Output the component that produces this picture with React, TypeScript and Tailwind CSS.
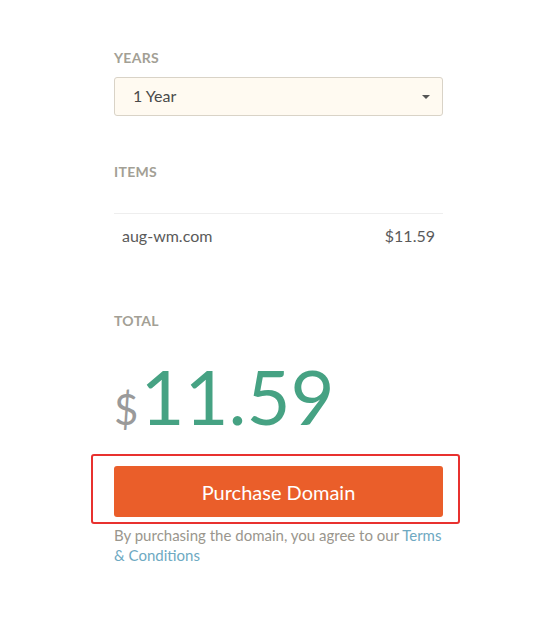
import React from "react";

export default function App() {
  return (
    <div className="min-h-[636px] w-full bg-white" style={{ fontFamily: 'Lato, "Open Sans", sans-serif' }}>
      <div className="ml-[114px] w-[329px] pt-[49px]">
        <div className="text-[14px] font-bold leading-[18px] text-[#a39f95] tracking-[0.3px]">YEARS</div>
        <div className="mt-[10px] flex h-[39px] items-center justify-between rounded-[3px] border border-[#d9d3c7] bg-[#fffaf1] pl-[18px] pr-[10px]">
          <span className="-mt-[2px] text-[16px] text-[#4a4a4a]">1 Year</span>
          <svg width="10" height="6" viewBox="0 0 10 6" className="mr-[1px]">
            <path d="M1 1h8L5 5z" fill="#555" />
          </svg>
        </div>
        <div className="mt-[47px] text-[14px] font-bold leading-[18px] text-[#a39f95] tracking-[0.3px]">ITEMS</div>
        <div className="mt-[32px] border-t border-[#eeeeee]"></div>
        <div className="mt-[11px] flex items-center justify-between pl-[8px] pr-[8px] text-[16px] leading-[22px] text-[#5a5a5a]">
          <span>aug-wm.com</span>
          <span>$11.59</span>
        </div>
        <div className="mt-[65px] text-[14px] font-bold leading-[18px] text-[#a39f95] tracking-[0.3px]">TOTAL</div>
        <div className="mt-[28px] flex items-baseline leading-none">
          <span className="text-[42px] text-[#9a9a9a]">$</span>
          <span className="ml-[2px] text-[76px] text-[#46a283]">11.59</span>
        </div>
        <div className="relative mt-[32px]">
          <div className="absolute -left-[23px] -right-[17px] -top-[12px] -bottom-[7px] rounded-[3px] border-2 border-[#e8312f]"></div>
          <button className="flex h-[51px] w-full items-center justify-center rounded-[3px] bg-[#ea5e2a] text-[20px] text-white">
            Purchase Domain
          </button>
        </div>
        <p className="mt-[8px] text-[15px] leading-[20px] text-[#9a968d]">
          By purchasing the domain, you agree to our <span className="text-[#6ea9c2]">Terms &amp; Conditions</span>
        </p>
      </div>
    </div>
  );
}
